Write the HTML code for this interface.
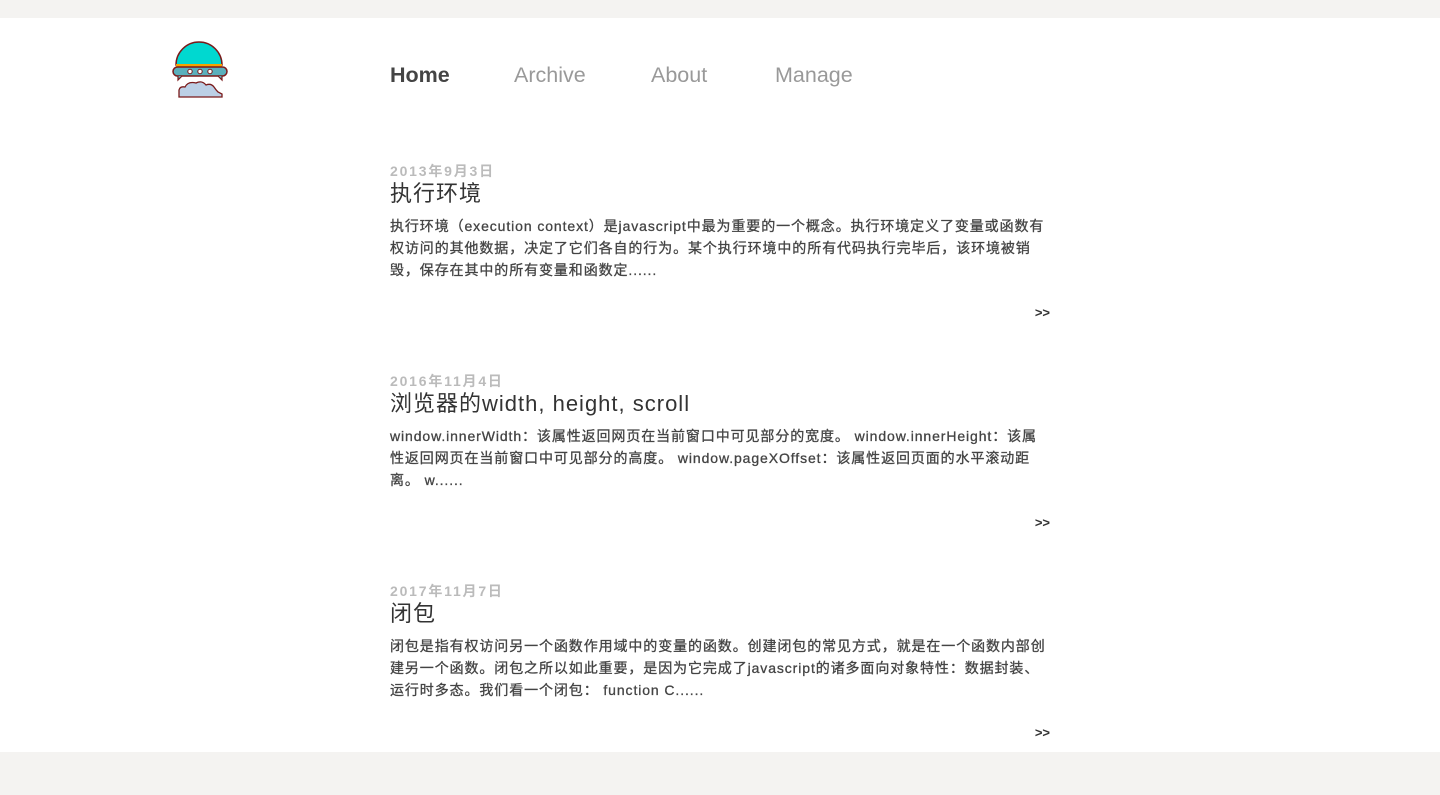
<!DOCTYPE html>
<html><head><meta charset="utf-8"><style>
body{margin:0;background:#f4f3f1;font-family:"Liberation Sans","Noto Sans CJK SC",sans-serif;}
.main{position:absolute;top:18px;left:0;width:1440px;height:734px;background:#fff;}
.logo{position:absolute;left:170px;top:22px;}
.nav{position:absolute;left:390px;top:45px;font-size:21.5px;}
.nav span{position:absolute;white-space:nowrap;color:#999;}
.post{position:absolute;left:390px;width:660px;}
.date{font-size:14px;font-weight:bold;color:#bbb;height:18px;line-height:18px;letter-spacing:1.8px;margin-top:3px;}
.title{font-size:22px;color:#333;line-height:28px;letter-spacing:1px;}
.txt{font-size:14px;color:#444;line-height:22px;margin-top:7px;-webkit-text-stroke:.3px #444;letter-spacing:.9px;white-space:nowrap;}
.more{position:absolute;right:0;font-size:13px;font-weight:bold;color:#333;}
</style></head><body>
<div class="main">
<svg class="logo" width="60" height="60" viewBox="0 0 60 60">
<path d="M6 25 A23 23 0 0 1 52 25 Z" fill="#00d8d0" stroke="#7a1a1a" stroke-width="1.5"/>
<rect x="6" y="24" width="46" height="3" fill="#f5a300"/>
<rect x="3" y="27" width="54" height="9" rx="4.5" fill="#5ab0bc" stroke="#7a1a1a" stroke-width="1.5"/>
<path d="M8 36 L8 40 L12 36 M52 36 L52 40 L48 36" fill="#5ab0bc" stroke="#7a1a1a" stroke-width="1.2"/>
<circle cx="20" cy="31.5" r="2.2" fill="#fff" stroke="#7a1a1a" stroke-width="1"/>
<circle cx="30" cy="31.5" r="2.2" fill="#fff" stroke="#7a1a1a" stroke-width="1"/>
<circle cx="40" cy="31.5" r="2.2" fill="#fff" stroke="#7a1a1a" stroke-width="1"/>
<path d="M9 57 L9 50 Q10 46 15 47 Q18 41 26 43 Q32 40 36 45 Q41 43 44 47 Q46 50 48 52 L52 54 L52 57 Z" fill="#bcd0e6" stroke="#7a1a1a" stroke-width="1.3"/>
</svg>
<div class="nav"><span style="left:0;color:#444;font-weight:bold;">Home</span><span style="left:124px">Archive</span><span style="left:261px">About</span><span style="left:385px">Manage</span></div>

<div class="post" style="top:141px;">
<div class="date">2013年9月3日</div>
<div class="title">执行环境</div>
<div class="txt">执行环境（execution context）是javascript中最为重要的一个概念。执行环境定义了变量或函数有<br>权访问的其他数据，决定了它们各自的行为。某个执行环境中的所有代码执行完毕后，该环境被销<br>毁，保存在其中的所有变量和函数定......</div>
<div class="more" style="top:146px">&gt;&gt;</div>
</div>

<div class="post" style="top:351px;">
<div class="date">2016年11月4日</div>
<div class="title">浏览器的width, height, scroll</div>
<div class="txt">window.innerWidth：该属性返回网页在当前窗口中可见部分的宽度。 window.innerHeight：该属<br>性返回网页在当前窗口中可见部分的高度。 window.pageXOffset：该属性返回页面的水平滚动距<br>离。 w......</div>
<div class="more" style="top:146px">&gt;&gt;</div>
</div>

<div class="post" style="top:561px;">
<div class="date">2017年11月7日</div>
<div class="title">闭包</div>
<div class="txt">闭包是指有权访问另一个函数作用域中的变量的函数。创建闭包的常见方式，就是在一个函数内部创<br>建另一个函数。闭包之所以如此重要，是因为它完成了javascript的诸多面向对象特性：数据封装、<br>运行时多态。我们看一个闭包： function C......</div>
<div class="more" style="top:146px">&gt;&gt;</div>
</div>
</div>
</body></html>
